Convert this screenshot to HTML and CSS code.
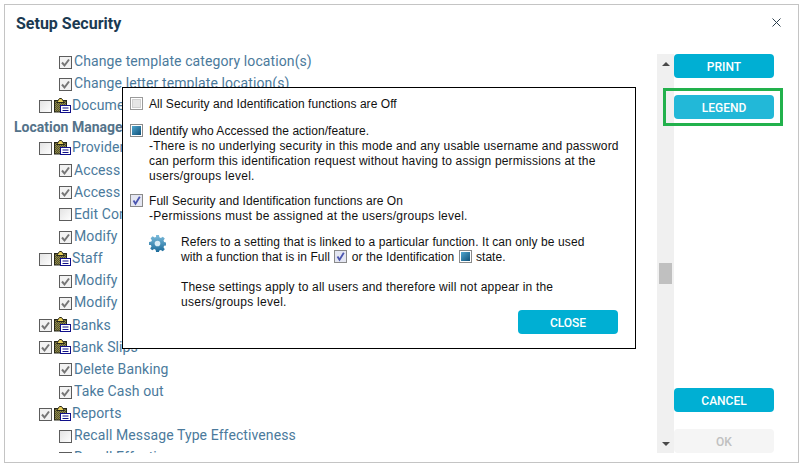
FILE: index.html
```html
<!DOCTYPE html>
<html lang="en">
<head>
  <meta charset="UTF-8">
  <title>Setup Security</title>
  <link rel="stylesheet" href="styles.css">
</head>
<body>

  <svg class="icon-defs" width="0" height="0">
    <defs>
      <linearGradient id="boxFill" x1="0" y1="0" x2="1" y2="1">
        <stop offset="0" stop-color="#e2e2e2"/>
        <stop offset="1" stop-color="#ffffff"/>
      </linearGradient>
      <linearGradient id="blueFill" x1="0" y1="0" x2="1" y2="1">
        <stop offset="0" stop-color="#4fa6cf"/>
        <stop offset="1" stop-color="#0f5078"/>
      </linearGradient>
      <linearGradient id="gearFill" x1="0" y1="0" x2="0" y2="1">
        <stop offset="0" stop-color="#7cbcdc"/>
        <stop offset="1" stop-color="#1c6b9a"/>
      </linearGradient>
      <pattern id="dither" width="2" height="2" patternUnits="userSpaceOnUse">
        <rect width="2" height="2" fill="#8f8a4a"/>
        <rect width="1" height="1" fill="#55522c"/>
        <rect x="1" y="1" width="1" height="1" fill="#55522c"/>
      </pattern>
      <symbol id="box-off" viewBox="0 0 13 13">
        <rect x="0.5" y="0.5" width="12" height="12" fill="url(#boxFill)" stroke="#5c5c5c"/>
      </symbol>
      <symbol id="box-on" viewBox="0 0 13 13">
        <rect x="0.5" y="0.5" width="12" height="12" fill="#f2f2f2" stroke="#5c5c5c"/>
        <path d="M3 6.500 L5.500 9.500 L10 3.500" fill="none" stroke="#757575" stroke-width="2"/>
      </symbol>
      <symbol id="legend-off" viewBox="0 0 13 13">
        <rect x="0.5" y="0.5" width="12" height="12" fill="#fff" stroke="#9a9a9a"/>
        <rect x="2.500" y="2.500" width="8" height="8" fill="#e6e6e6" stroke="#d0d0d0"/>
      </symbol>
      <symbol id="legend-id" viewBox="0 0 13 13">
        <rect x="0.5" y="0.5" width="12" height="12" fill="#fff" stroke="#8a8a8a"/>
        <rect x="2" y="2" width="9" height="9" fill="url(#blueFill)"/>
      </symbol>
      <symbol id="legend-full" viewBox="0 0 13 13">
        <rect x="0.5" y="0.5" width="12" height="12" fill="#e4e6f2" stroke="#8a8a8a"/>
        <path d="M3.500 6.500 L5.500 9.800 L9.800 2.800" fill="none" stroke="#4a55b0" stroke-width="1.800"/>
      </symbol>
      <symbol id="clipboard" viewBox="0 0 17 15">
        <rect x="0.5" y="2.500" width="12" height="11.500" fill="url(#dither)" stroke="#26261a"/>
        <path d="M2.500 4.500 L5.500 0.500 L7.500 0.500 L10.500 4.500 Z" fill="#e8cf5a" stroke="#26261a"/>
        <rect x="6.500" y="7.500" width="10" height="7" fill="#fff" stroke="#10108a"/>
        <path d="M8.500 10 H14.500 M8.500 12.500 H14.500" stroke="#10108a"/>
      </symbol>
    </defs>
  </svg>

  <div class="window">
    <div class="window-head">
      <h1 class="window-title">Setup Security</h1>
      <svg class="close-x" width="9" height="9" viewBox="0 0 9 9">
        <path d="M0.500 0.500 L8.500 8.500 M8.500 0.500 L0.500 8.500" stroke="#2c3e4c" fill="none"/>
      </svg>
    </div>

    <div class="window-body">
      <div class="tree">
        <div class="tree-rows">
          <div class="row sub"><svg class="box"><use href="#box-on"/></svg><span>Change template category location(s)</span></div>
          <div class="row sub"><svg class="box"><use href="#box-on"/></svg><span>Change letter template location(s)</span></div>
          <div class="row top"><svg class="box"><use href="#box-off"/></svg><svg class="clip"><use href="#clipboard"/></svg><span>Documents</span></div>
          <div class="row group">Location Management</div>
          <div class="row top"><svg class="box"><use href="#box-off"/></svg><svg class="clip"><use href="#clipboard"/></svg><span>Providers</span></div>
          <div class="row sub"><svg class="box"><use href="#box-on"/></svg><span>Access</span></div>
          <div class="row sub"><svg class="box"><use href="#box-on"/></svg><span>Access</span></div>
          <div class="row sub"><svg class="box"><use href="#box-off"/></svg><span>Edit Contact</span></div>
          <div class="row sub"><svg class="box"><use href="#box-on"/></svg><span>Modify</span></div>
          <div class="row top"><svg class="box"><use href="#box-off"/></svg><svg class="clip"><use href="#clipboard"/></svg><span>Staff</span></div>
          <div class="row sub"><svg class="box"><use href="#box-on"/></svg><span>Modify</span></div>
          <div class="row sub"><svg class="box"><use href="#box-on"/></svg><span>Modify</span></div>
          <div class="row top"><svg class="box"><use href="#box-on"/></svg><svg class="clip"><use href="#clipboard"/></svg><span>Banks</span></div>
          <div class="row top"><svg class="box"><use href="#box-on"/></svg><svg class="clip"><use href="#clipboard"/></svg><span>Bank Slips</span></div>
          <div class="row sub"><svg class="box"><use href="#box-on"/></svg><span>Delete Banking</span></div>
          <div class="row sub"><svg class="box"><use href="#box-on"/></svg><span>Take Cash out</span></div>
          <div class="row top"><svg class="box"><use href="#box-on"/></svg><svg class="clip"><use href="#clipboard"/></svg><span>Reports</span></div>
          <div class="row sub"><svg class="box"><use href="#box-off"/></svg><span>Recall Message Type Effectiveness</span></div>
          <div class="row sub"><svg class="box"><use href="#box-off"/></svg><span>Recall Effectiveness</span></div>
        </div>
      </div>

      <div class="scrollbar">
        <div class="arrow-up"></div>
        <div class="thumb"></div>
        <div class="arrow-down"></div>
      </div>

      <div class="actions">
        <button class="btn">PRINT</button>
        <button class="btn btn-legend">LEGEND</button>
        <div class="actions-gap"></div>
        <button class="btn">CANCEL</button>
        <button class="btn btn-off">OK</button>
      </div>
    </div>
  </div>

  <div class="legend">
    <div class="legend-item">
      <svg class="legend-box"><use href="#legend-off"/></svg>
      <p>All Security and Identification functions are Off</p>
    </div>
    <div class="legend-item legend-item-tight">
      <svg class="legend-box"><use href="#legend-id"/></svg>
      <p>Identify who Accessed the action/feature.<br><span class="wide">-There is no underlying security in this mode and any usable username and password</span><br><span class="wide">can perform this identification request without having to assign permissions at the</span><br><span class="wider">users/groups level.</span></p>
    </div>
    <div class="legend-item">
      <svg class="legend-box"><use href="#legend-full"/></svg>
      <p>Full Security and Identification functions are On<br><span class="wider">-Permissions must be assigned at the users/groups level.</span></p>
    </div>
    <div class="legend-note">
      <svg class="gear" width="17" height="17" viewBox="0 0 24 24">
        <path fill="url(#gearFill)" d="M10 0h4l.7 3.300 2 .8L19.500 2.300l2.800 2.800-1.800 2.800.8 2 3.300.7v4l-3.300.7-.8 2 1.800 2.800-2.800 2.800-2.800-1.800-2 .8L14 24h-4l-.7-3.300-2-.8-2.800 1.800-2.800-2.800 1.800-2.800-.8-2L0 14v-4l3.300-.7.8-2L2.300 4.500l2.800-2.800 2.800 1.800 2-.8z"/>
        <circle cx="12" cy="12" r="4" fill="#d8ecf6"/>
      </svg>
      <div class="note-text">
        <p><span class="mid">Refers to a setting that is linked to a particular function. It can only be used</span><br>with a function that is in Full <svg class="inline-box"><use href="#legend-full"/></svg> or the Identification <svg class="inline-box"><use href="#legend-id"/></svg> state.</p>
        <p><span class="wide">These settings apply to all users and therefore will not appear in the</span><br><span class="wider">users/groups level.</span></p>
      </div>
    </div>
    <button class="btn btn-close">CLOSE</button>
  </div>

</body>
</html>
```

FILE: styles.css
```css
html, body {
  margin: 0;
  padding: 0;
  background: #fff;
}

body {
  width: 805px;
  height: 469px;
  overflow: hidden;
  position: relative;
  font-family: "Roboto", sans-serif;
}

.icon-defs {
  position: absolute;
}

.window {
  margin: 4px 0 0 4px;
  width: 795px;
  height: 459px;
  box-sizing: border-box;
  border: 1px solid #c4c4c4;
  display: flex;
  flex-direction: column;
}

.window-head {
  height: 49px;
  display: flex;
  justify-content: space-between;
  padding: 9px 17px 0 11px;
  box-sizing: border-box;
}

.window-title {
  margin: 0;
  font-size: 16px;
  line-height: 20px;
  font-weight: 700;
  color: #1b3a52;
}

.close-x {
  margin-top: 4px;
}

.window-body {
  display: flex;
  height: 399px;
}

.tree {
  width: 652px;
  overflow: hidden;
  padding-left: 9px;
  box-sizing: border-box;
}

.tree-rows {
  margin-top: -4px;
}

.row {
  height: 22.15px;
  display: flex;
  align-items: center;
  font-size: 14px;
  letter-spacing: 0.1px;
  color: #4b7a9c;
  white-space: nowrap;
}

.row.sub {
  padding-left: 45px;
}

.row.top {
  padding-left: 25px;
}

.row.group {
  height: 20px;
  padding-top: 2px;
  box-sizing: border-box;
  font-weight: 700;
  color: #54738a;
  letter-spacing: 0;
}

.box {
  width: 13px;
  height: 13px;
  margin: 2px 2px 0 0;
  flex: none;
}

.clip {
  width: 17px;
  height: 15px;
  margin: 0 1px 0 0;
  flex: none;
}

.scrollbar {
  width: 17px;
  background: #f0f0f0;
  position: relative;
  flex: none;
}

.thumb {
  position: absolute;
  left: 2px;
  top: 209px;
  width: 13px;
  height: 21px;
  background: #c0c0c0;
}

.arrow-up, .arrow-down {
  position: absolute;
  left: 5px;
  width: 0;
  height: 0;
  border-left: 4px solid transparent;
  border-right: 4px solid transparent;
}

.arrow-up {
  top: 8px;
  border-bottom: 4px solid #4a4a4a;
}

.arrow-down {
  bottom: 7px;
  border-top: 4px solid #4a4a4a;
}

.actions {
  width: 100px;
  display: flex;
  flex-direction: column;
  flex: none;
}

.actions-gap {
  height: 271px;
}

.btn {
  width: 100px;
  height: 24px;
  padding: 1px 0 0;
  border: 0;
  border-radius: 4px;
  background: #00afd3;
  color: #fff;
  font-family: "Roboto", sans-serif;
  font-size: 12px;
  font-weight: 500;
  text-align: center;
  flex: none;
}

.btn-legend {
  margin-top: 17px;
  background: #22b8d8;
  position: relative;
}

.btn-legend::after {
  content: "";
  position: absolute;
  top: -7px;
  bottom: -7px;
  left: -11px;
  right: -9px;
  border: 3px solid #22b14c;
}

.btn-off {
  margin-top: 17px;
  background: #f5f5f5;
  color: #c0c0c0;
}

/* legend popup over the tree */
.legend {
  position: absolute;
  left: 122px;
  top: 87px;
  width: 514px;
  height: 262px;
  box-sizing: border-box;
  border: 1px solid #000;
  background: #fff;
  padding: 9px 0 0 7px;
  font-family: "Liberation Sans", sans-serif;
  font-size: 12px;
  line-height: 15px;
  letter-spacing: 0.05px;
  color: #111;
}

.legend p {
  margin: 0;
}

.wide {
  letter-spacing: 0.18px;
}

.wider {
  letter-spacing: 0.26px;
}

.mid {
  letter-spacing: 0.09px;
}

.legend-item {
  display: flex;
  gap: 6px;
  margin-bottom: 12px;
}

.legend-item-tight {
  margin-bottom: 10px;
}

.legend-box {
  width: 13px;
  height: 13px;
  flex: none;
}

.legend-note {
  display: flex;
  margin: -1px 0 0 19px;
}

.gear {
  flex: none;
}

.note-text {
  margin-left: 15px;
}

.note-text p + p {
  margin-top: 15px;
}

.inline-box {
  width: 13px;
  height: 13px;
  vertical-align: -2px;
  margin: 0 1px;
}

.btn-close {
  display: block;
  margin: 0 0 0 388px;
  position: relative;
}
```
